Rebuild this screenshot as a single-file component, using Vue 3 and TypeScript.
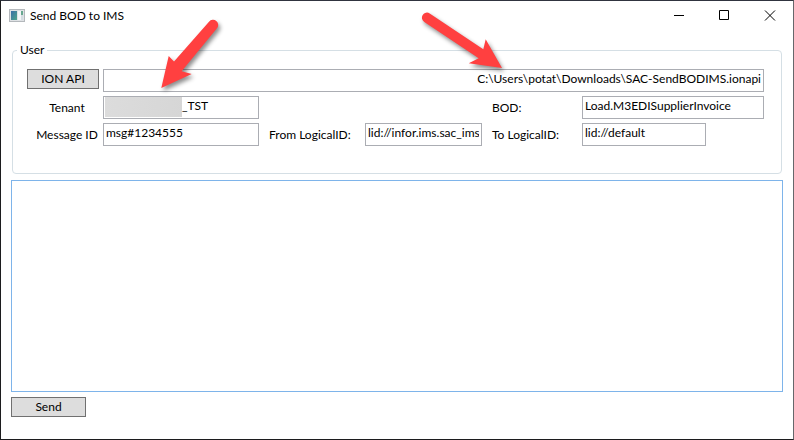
<script setup lang="ts">
import { ref } from 'vue'

const apiFile = ref<string>('C:\\Users\\potat\\Downloads\\SAC-SendBODIMS.ionapi')
const tenant = ref<string>('_TST')
const messageId = ref<string>('msg#1234555')
const bod = ref<string>('Load.M3EDISupplierInvoice')
const fromLogicalId = ref<string>('lid://infor.ims.sac_ims')
const toLogicalId = ref<string>('lid://default')
const body = ref<string>('')
</script>

<template>
  <div class="window">
    <header class="titlebar">
      <svg class="app-icon" width="16" height="14" viewBox="0 0 16 14" aria-hidden="true">
        <defs>
          <linearGradient id="pane" x1="0" y1="0" x2="1" y2="1">
            <stop offset="0" stop-color="#3a6ea8" />
            <stop offset="1" stop-color="#4fa58a" />
          </linearGradient>
        </defs>
        <rect x="0.5" y="0.5" width="15" height="12" fill="#dfe2e5" stroke="#b4b8bc" />
        <rect x="2" y="2" width="6" height="9" fill="url(#pane)" />
        <rect x="9" y="2" width="3" height="9" fill="#f4f6f8" />
        <rect x="12" y="2" width="2" height="4" fill="#68a790" />
        <rect x="12" y="6" width="2" height="5" fill="#d5dce2" />
      </svg>
      <h1 class="title">Send BOD to IMS</h1>
      <div class="controls">
        <button type="button" class="control" aria-label="Minimize">
          <svg width="12" height="11" viewBox="0 0 12 11"><path d="M2 5.5H12" /></svg>
        </button>
        <button type="button" class="control" aria-label="Maximize">
          <svg width="12" height="11" viewBox="0 0 12 11"><path d="M1.5 .5H10.5V9.5H1.5Z" /></svg>
        </button>
        <button type="button" class="control" aria-label="Close">
          <svg width="12" height="11" viewBox="0 0 12 11"><path d="M1 .5L11 10.5M11 .5L1 10.5" /></svg>
        </button>
      </div>
    </header>

    <main class="content">
      <fieldset class="group">
        <legend>User</legend>
        <div class="form">
          <button type="button" class="button api-button">ION API</button>
          <input v-model="apiFile" class="field api-file" type="text" aria-label="ION API file" />

          <label class="label centered" for="tenant">Tenant</label>
          <input id="tenant" v-model="tenant" class="field tenant" type="text" />
          <label class="label bod-label" for="bod">BOD:</label>
          <input id="bod" v-model="bod" class="field" type="text" />

          <label class="label centered" for="message">Message ID</label>
          <input id="message" v-model="messageId" class="field" type="text" />
          <label class="label" for="from">From LogicalID:</label>
          <input id="from" v-model="fromLogicalId" class="field" type="text" />
          <label class="label" for="to">To LogicalID:</label>
          <input id="to" v-model="toLogicalId" class="field to-id" type="text" />
        </div>
      </fieldset>
      <textarea v-model="body" class="body" aria-label="Message body"></textarea>
      <button type="button" class="button send">Send</button>
    </main>

    <svg class="arrows" width="794" height="110" viewBox="0 0 794 110" aria-hidden="true">
      <path d="M161.3 88L168.7 56L174 61.5L209 21.7A5 5 0 0 1 217 28.3L181.7 71.3L191.7 74Z" />
      <path d="M502 68L485.7 39.3L483.3 49.3L429.7 13.4A5 5 0 0 0 424.3 22L478.7 58.3L468.7 63.3Z" />
    </svg>
  </div>
</template>

<style>
body {
  margin: 0;
}
</style>

<style scoped>
.window {
  position: relative;
  display: flex;
  flex-direction: column;
  box-sizing: border-box;
  min-height: 100vh;
  overflow: hidden;
  border: 1px solid #1c1c1e;
  border-top-color: #30343f;
  border-right-color: #66676b;
  background: #fff;
  color: #000;
  font: 12px/16px "Segoe UI", Lato, "Noto Sans", sans-serif;
}
.titlebar {
  display: flex;
  align-items: center;
  height: 29px;
  padding-left: 8px;
}
.title {
  flex: 1;
  margin: 0 0 0 5px;
  font-size: 12px;
  font-weight: 400;
}
.controls {
  display: flex;
}
.control {
  display: flex;
  align-items: center;
  justify-content: center;
  width: 46px;
  height: 29px;
  padding: 0;
  border: 0;
  background: none;
}
.control path {
  fill: none;
  stroke: #000;
}
.content {
  display: flex;
  flex: 1;
  flex-direction: column;
  padding: 12px 10px 22px;
}
.group {
  min-width: 0;
  margin: 0 1px 6px;
  padding: 0 17px 27px 0;
  border: 1px solid #d5dfe5;
  border-radius: 4px;
}
legend {
  margin-left: 4px;
  padding: 0 3px;
}
.form {
  display: grid;
  grid-template-columns: 90px 156fr 106px 117fr 100px 182fr;
  grid-auto-rows: 23px;
  row-gap: 4px;
  align-items: center;
  padding-top: 11px;
}
.button {
  box-sizing: border-box;
  height: 20px;
  padding: 0;
  border: 1px solid #707070;
  background: #ddd;
  color: #000;
  font: inherit;
}
.api-button {
  align-self: start;
  margin: 0 4px 0 14px;
}
.label {
  padding-left: 10px;
  white-space: nowrap;
}
.centered {
  padding-left: 18px;
  text-align: center;
}
.field {
  box-sizing: border-box;
  width: 100%;
  min-width: 0;
  height: 23px;
  padding: 0 2px 5px;
  border: 1px solid #abadb3;
  border-radius: 0;
  background: #fff;
  color: #000;
  font: inherit;
}
.api-file {
  grid-column: 2 / -1;
  text-align: right;
}
.tenant {
  padding-left: 78px;
  background: linear-gradient(100deg, #dcdcdc, #d6d6d6) 1px 0 / 77px 20px no-repeat #fff;
}
.bod-label {
  grid-column: 5;
}
.to-id {
  width: 68%;
}
.body {
  box-sizing: border-box;
  flex: 1;
  min-height: 120px;
  padding: 2px;
  border: 1px solid #7eb4ea;
  outline: 0;
  resize: none;
  font: inherit;
}
.send {
  width: 75px;
  margin-top: 5px;
}
.arrows {
  position: absolute;
  top: -1px;
  left: -1px;
  pointer-events: none;
}
.arrows path {
  fill: #ff4040;
  filter: drop-shadow(2px 3px 2px rgba(0, 0, 0, 0.45));
}
</style>
